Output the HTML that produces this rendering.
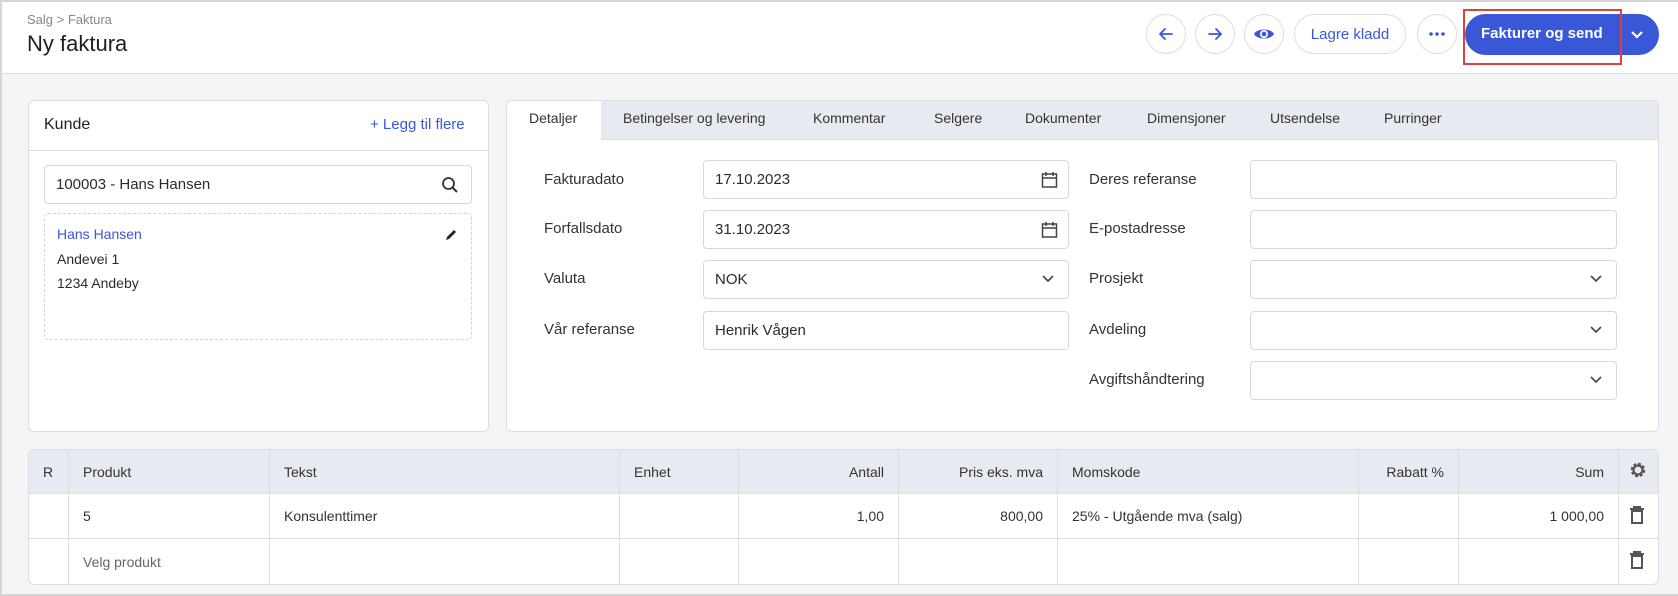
<!DOCTYPE html>
<html><head><meta charset="utf-8"><style>
*{box-sizing:border-box;margin:0;padding:0}
body{width:1678px;height:596px;overflow:hidden;background:#f4f5f7;font-family:"Liberation Sans",sans-serif;color:#2b2b2b;position:relative}
.abs{position:absolute}
.frame{position:absolute;left:0;top:0;width:1678px;height:596px;border:2px solid #d6d6d6;border-right:none;pointer-events:none;z-index:10}
.hdr{left:0;top:0;width:1678px;height:74px;background:#fff;border-bottom:1px solid #dcdde0}
.circ{position:absolute;width:40px;height:40px;border:1px solid #dcdde0;border-radius:20px;background:#fff;display:flex;align-items:center;justify-content:center}
.card{background:#fff;border:1px solid #dcdde3;border-radius:6px;position:absolute}
.inp{position:absolute;height:39px;border:1px solid #d6d8dd;border-radius:4px;background:#fff;font-size:15px;padding-left:11px;line-height:37px;color:#2b2b2b}
.lbl{position:absolute;font-size:15px;color:#333}
.ico{position:absolute;right:10px;top:10px}
.tab{position:absolute;top:110px;font-size:14px;color:#333}
table{position:absolute;left:28px;top:449px;width:1631px;border-collapse:separate;border-spacing:0;border:1px solid #dcdde3;border-radius:6px;background:#fff;font-size:14px;overflow:hidden}
td,th{border-right:1px solid #dcdde3;border-bottom:1px solid #dcdde3;padding:0 14px;font-weight:normal;text-align:left;color:#333}
th{background:#e8eaf1;height:44px}
td{height:45px}
tr:last-child td{border-bottom:none}
td:last-child,th:last-child{border-right:none}
.r{text-align:right}
</style></head><body>
<div class="abs hdr"></div>
<div class="abs" style="left:27px;top:12px;font-size:13px;color:#888">Salg &gt; Faktura</div>
<div class="abs" style="left:27px;top:31px;font-size:22px;color:#1f1f1f">Ny faktura</div>

<div class="circ" style="left:1146px;top:14px"><svg width="18" height="18" viewBox="0 0 18 18"><path d="M15 9H3M8 4L3 9l5 5" stroke="#3a57d8" stroke-width="1.8" fill="none" stroke-linecap="round" stroke-linejoin="round"/></svg></div>
<div class="circ" style="left:1195px;top:14px"><svg width="18" height="18" viewBox="0 0 18 18"><path d="M3 9h12M10 4l5 5-5 5" stroke="#3a57d8" stroke-width="1.8" fill="none" stroke-linecap="round" stroke-linejoin="round"/></svg></div>
<div class="circ" style="left:1244px;top:14px"><svg width="22" height="16" viewBox="0 0 22 16"><path d="M1 8C4 2 18 2 21 8C18 14 4 14 1 8Z" fill="#3a57d8"/><circle cx="11" cy="8" r="4" fill="#fff"/><circle cx="11" cy="8" r="2.3" fill="#3a57d8"/></svg></div>
<div class="circ" style="left:1294px;top:14px;width:112px;font-size:15px;color:#3a57d8">Lagre kladd</div>
<div class="circ" style="left:1417px;top:14px"><svg width="16" height="4"><circle cx="2" cy="2" r="1.8" fill="#3a57d8"/><circle cx="8" cy="2" r="1.8" fill="#3a57d8"/><circle cx="14" cy="2" r="1.8" fill="#3a57d8"/></svg></div>
<div class="abs" style="left:1465px;top:14px;width:194px;height:41px;border-radius:21px;background:#3a57d8"></div>
<div class="abs" style="left:1481px;top:25px;font-size:15px;color:#fff;font-weight:bold">Fakturer og send</div>
<svg class="abs" style="left:1630px;top:30px" width="14" height="10"><path d="M2 2l5 5 5-5" stroke="#fff" stroke-width="2.2" fill="none"/></svg>
<div class="abs" style="left:1463px;top:9px;width:159px;height:56px;border:2px solid #d9423f"></div>

<div class="card" style="left:28px;top:100px;width:461px;height:332px"></div>
<div class="abs" style="left:44px;top:116px;font-size:16px;color:#222">Kunde</div>
<div class="abs" style="left:370px;top:116px;font-size:15px;color:#3a57d8">+ Legg til flere</div>
<div class="abs" style="left:29px;top:150px;width:459px;border-top:1px solid #dcdde3"></div>
<div class="inp" style="left:44px;top:165px;width:428px;font-size:15px">100003 - Hans Hansen
<svg class="ico" style="right:12px;top:10px" width="18" height="18" viewBox="0 0 18 18"><circle cx="7.5" cy="7.5" r="5.5" stroke="#333" stroke-width="1.8" fill="none"/><path d="M11.5 11.5L16 16" stroke="#333" stroke-width="2"/></svg></div>
<div class="abs" style="left:44px;top:213px;width:428px;height:127px;border:1px dashed #d0d2d6;border-radius:4px"></div>
<div class="abs" style="left:57px;top:226px;font-size:14px;color:#3a57d8">Hans Hansen</div>
<div class="abs" style="left:57px;top:251px;font-size:14px">Andevei 1</div>
<div class="abs" style="left:57px;top:275px;font-size:14px">1234 Andeby</div>
<svg class="abs" style="left:445px;top:228px" width="13" height="13" viewBox="0 0 13 13"><path d="M1 12l1-3 7-7 2 2-7 7z" fill="#222"/></svg>

<div class="card" style="left:506px;top:100px;width:1153px;height:332px;overflow:hidden">
<div style="position:absolute;left:0;top:0;width:100%;height:39px;background:#e8eaf1;border-bottom:1px solid #dcdde3"></div>
<div style="position:absolute;left:0;top:0;width:94px;height:40px;background:#fff"></div>
</div>
<div class="tab" style="left:529px">Detaljer</div>
<div class="tab" style="left:623px">Betingelser og levering</div>
<div class="tab" style="left:813px">Kommentar</div>
<div class="tab" style="left:934px">Selgere</div>
<div class="tab" style="left:1025px">Dokumenter</div>
<div class="tab" style="left:1147px">Dimensjoner</div>
<div class="tab" style="left:1270px">Utsendelse</div>
<div class="tab" style="left:1384px">Purringer</div>

<div class="lbl" style="left:544px;top:171px">Fakturadato</div>
<div class="lbl" style="left:544px;top:220px">Forfallsdato</div>
<div class="lbl" style="left:544px;top:270px">Valuta</div>
<div class="lbl" style="left:544px;top:321px">Vår referanse</div>
<div class="inp" style="left:703px;top:160px;width:366px">17.10.2023<svg class="ico" width="17" height="18" viewBox="0 0 17 18"><rect x="1.5" y="3" width="14" height="13" stroke="#444" stroke-width="1.5" fill="none"/><path d="M1.5 7h14M5 1v4M12 1v4" stroke="#444" stroke-width="1.5"/></svg></div>
<div class="inp" style="left:703px;top:210px;width:366px">31.10.2023<svg class="ico" width="17" height="18" viewBox="0 0 17 18"><rect x="1.5" y="3" width="14" height="13" stroke="#444" stroke-width="1.5" fill="none"/><path d="M1.5 7h14M5 1v4M12 1v4" stroke="#444" stroke-width="1.5"/></svg></div>
<div class="inp" style="left:703px;top:260px;width:366px">NOK<svg class="ico" style="top:14px;right:14px" width="12" height="8"><path d="M1 1l5 5 5-5" stroke="#444" stroke-width="1.6" fill="none"/></svg></div>
<div class="inp" style="left:703px;top:311px;width:366px">Henrik Vågen</div>

<div class="lbl" style="left:1089px;top:171px">Deres referanse</div>
<div class="lbl" style="left:1089px;top:220px">E-postadresse</div>
<div class="lbl" style="left:1089px;top:270px">Prosjekt</div>
<div class="lbl" style="left:1089px;top:321px">Avdeling</div>
<div class="lbl" style="left:1089px;top:371px">Avgiftshåndtering</div>
<div class="inp" style="left:1250px;top:160px;width:367px"></div>
<div class="inp" style="left:1250px;top:210px;width:367px"></div>
<div class="inp" style="left:1250px;top:260px;width:367px"><svg class="ico" style="top:14px;right:14px" width="12" height="8"><path d="M1 1l5 5 5-5" stroke="#444" stroke-width="1.6" fill="none"/></svg></div>
<div class="inp" style="left:1250px;top:311px;width:367px"><svg class="ico" style="top:14px;right:14px" width="12" height="8"><path d="M1 1l5 5 5-5" stroke="#444" stroke-width="1.6" fill="none"/></svg></div>
<div class="inp" style="left:1250px;top:361px;width:367px"><svg class="ico" style="top:14px;right:14px" width="12" height="8"><path d="M1 1l5 5 5-5" stroke="#444" stroke-width="1.6" fill="none"/></svg></div>

<table>
<tr><th style="width:40px">R</th><th style="width:201px">Produkt</th><th style="width:350px">Tekst</th><th style="width:119px">Enhet</th><th class="r" style="width:160px">Antall</th><th class="r" style="width:159px">Pris eks. mva</th><th style="width:301px">Momskode</th><th class="r" style="width:100px">Rabatt %</th><th class="r" style="width:160px">Sum</th><th style="padding:0 10px"><svg width="18" height="18" viewBox="0 0 18 18"><circle cx="9" cy="9" r="5.5" fill="none" stroke="#555" stroke-width="3.5" stroke-dasharray="2.6 1.7"/><circle cx="9" cy="9" r="4.5" fill="none" stroke="#555" stroke-width="2.2"/></svg></th></tr>
<tr><td></td><td>5</td><td>Konsulenttimer</td><td></td><td class="r">1,00</td><td class="r">800,00</td><td>25% - Utgående mva (salg)</td><td></td><td class="r">1 000,00</td><td style="padding:0 10px"><svg width="16" height="18" viewBox="0 0 16 18"><path d="M1 3h14M5 3V1h6v2" stroke="#555" stroke-width="2" fill="none"/><rect x="3" y="5" width="10" height="12" stroke="#555" stroke-width="2" fill="none"/></svg></td></tr>
<tr><td></td><td style="color:#666">Velg produkt</td><td></td><td></td><td></td><td></td><td></td><td></td><td></td><td style="padding:0 10px"><svg width="16" height="18" viewBox="0 0 16 18"><path d="M1 3h14M5 3V1h6v2" stroke="#555" stroke-width="2" fill="none"/><rect x="3" y="5" width="10" height="12" stroke="#555" stroke-width="2" fill="none"/></svg></td></tr>
</table>
<div class="frame"></div>
</body></html>
